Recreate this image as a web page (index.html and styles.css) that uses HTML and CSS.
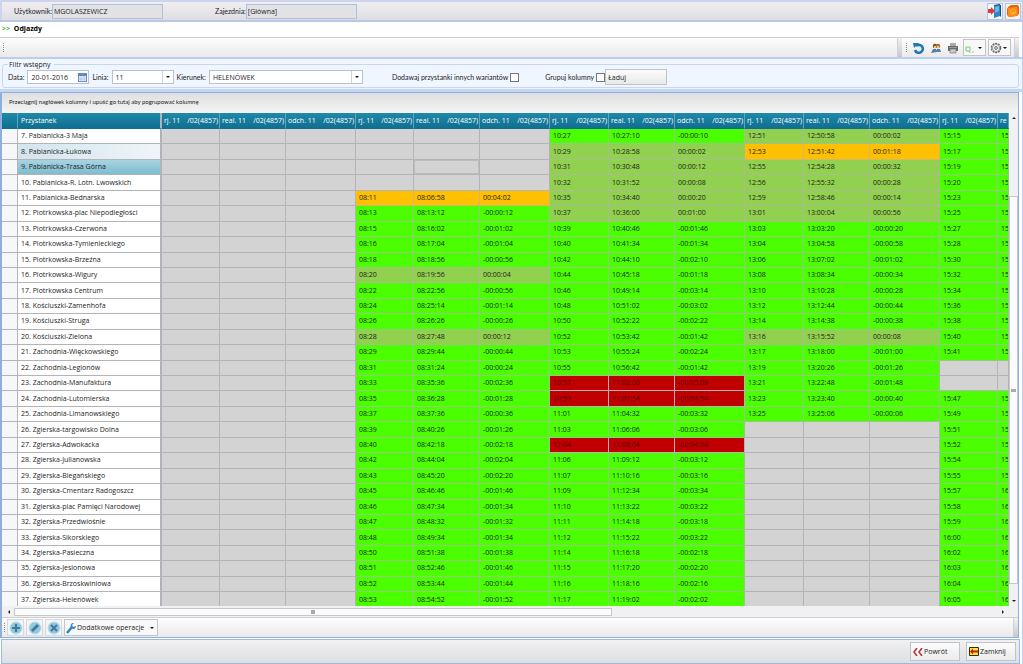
FILE: index.html
```html
<!DOCTYPE html>
<html lang="pl">
<head>
<meta charset="utf-8">
<title>Odjazdy</title>
<link rel="stylesheet" href="styles.css">
</head>
<body>
<div class="app">
  <header class="session">
    <label class="session-user" for="user">Użytkownik:</label>
    <input class="session-input" id="user" value="MGOLASZEWICZ" readonly>
    <label class="session-depot" for="depot">Zajezdnia:</label>
    <input class="session-input" id="depot" value="[Główna]" readonly>
    <div class="session-actions">
      <button class="square" aria-label="Wyloguj">
        <svg width="14" height="14" viewBox="0 0 14 14"><path d="M6 2l6-2v12l-6 2z" fill="#2b86c5"/><path d="M6 2V1l6-1v1zM12 1h1v11l-1 1z" fill="#174f7c"/><path d="M7 3l4-1v5L7 9z" fill="#69b7e6"/><path d="M0 5h3V3l4 4-4 4V9H0z" fill="#dc3a38"/></svg>
      </button>
      <button class="square" aria-label="Zakończ">
        <svg width="14" height="14" viewBox="0 0 14 14"><path d="M2 3l3-2h7l1 2v7l-2 2-8 1-2-2V5z" fill="#e66412"/><path d="M2 4l9-1 1 7-2 2-7 1-1-2z" fill="#ff8b17"/><path d="M4 6l4-1 2 2v2l-4 2-2-2z" fill="#ffb02d"/><path d="M5 9l2-3 2 2" fill="none" stroke="#e8701c" stroke-width=".8"/></svg>
      </button>
    </div>
  </header>

  <h1 class="title"><span class="title-mark">&gt;&gt;</span> Odjazdy</h1>

  <div class="toolbar toolbar-main">
    <span class="grip"></span>
    <span class="spacer"></span>
    <span class="endcap"></span>
    <span class="grip grip-tools"></span>
    <button class="tool" aria-label="Odśwież">
      <svg width="12" height="12" viewBox="0 0 12 12"><path d="M3 4a4 4 0 1 1-1 4" fill="none" stroke="#1e78b8" stroke-width="2.6"/><path d="M0 1l6 0-5 5z" fill="#1e78b8"/></svg>
    </button>
    <button class="tool" aria-label="Użytkownicy">
      <svg width="12" height="12" viewBox="0 0 12 12"><circle cx="5" cy="4" r="2.2" fill="#7a4a20"/><circle cx="8" cy="4" r="2.2" fill="#b06a2a"/><circle cx="5" cy="5" r="1.2" fill="#f1c48f"/><circle cx="8" cy="5" r="1.2" fill="#f1c48f"/><path d="M1 11l2-4h3l1 3zM6 10l1-3h3l1 3z" fill="#4e84a8"/></svg>
    </button>
    <button class="tool" aria-label="Drukuj">
      <svg width="12" height="12" viewBox="0 0 12 12"><path d="M3 1h6v4H3z" fill="#aaa"/><path d="M1 4h10v5H1z" fill="#666"/><path d="M2 5h8v1H2z" fill="#999"/><path d="M3 7h6v4H3z" fill="#ccc" stroke="#777" stroke-width=".7"/></svg>
    </button>
    <button class="split" aria-label="Eksport">
      <svg width="10" height="10" viewBox="0 0 10 10"><path d="M1 4h4v4H1zM4 8l1 2" fill="none" stroke="#76cf72"/><circle cx="8" cy="9" r=".8" fill="#76cf72"/></svg>
      <span class="arrow"></span>
    </button>
    <button class="split" aria-label="Ustawienia">
      <svg width="12" height="12" viewBox="0 0 12 12"><circle cx="6" cy="6" r="4.6" fill="none" stroke="#666" stroke-width="1.3" stroke-dasharray="2 .9"/><circle cx="6" cy="6" r="3.6" fill="none" stroke="#777" stroke-width=".7"/><circle cx="6" cy="6" r="1.4" fill="none" stroke="#666"/></svg>
      <span class="arrow"></span>
    </button>
    <span class="endcap"></span>
  </div>

  <form class="filter">
    <fieldset class="filter-set">
      <legend>Filtr wstępny</legend>
      <div class="filter-row">
        <label for="date">Data:</label>
        <span class="field field-date">
          <input id="date" value="20-01-2016">
          <svg width="9" height="9" viewBox="0 0 9 9"><rect x=".5" y=".5" width="8" height="8" fill="#dce9fa" stroke="#6889b8"/><path d="M0 1h9v2H0z" fill="#6889b8"/><path d="M3 3v6M6 3v6M0 6h9" stroke="#a3bbdd" stroke-width=".6"/></svg>
        </span>
        <label for="line">Linia:</label>
        <span class="field field-line"><select id="line"><option>11</option></select><span class="arrow"></span></span>
        <label for="direction">Kierunek:</label>
        <span class="field field-direction"><select id="direction"><option>HELENÓWEK</option></select><span class="arrow"></span></span>
        <label class="label-variants" for="variants">Dodawaj przystanki innych wariantów</label>
        <input class="check" type="checkbox" id="variants">
        <label class="label-group" for="group">Grupuj kolumny</label>
        <input class="check" type="checkbox" id="group">
        <button class="load" type="button">Ładuj</button>
      </div>
    </fieldset>
  </form>

  <main class="panel">
    <div class="group-hint">Przeciągnij nagłówek kolumny i upuść go tutaj aby pogrupować kolumnę</div>
    <div class="grid">
      <div class="grid-view">
        <table class="departures">
          <colgroup>
            <col class="c-mark"><col class="c-stop">
            <col class="c-plan-narrow"><col class="c-real"><col class="c-diff">
            <col class="c-plan-narrow"><col class="c-real"><col class="c-diff">
            <col class="c-plan"><col class="c-real"><col class="c-diff">
            <col class="c-plan"><col class="c-real"><col class="c-diff">
            <col class="c-plan-narrow"><col>
          </colgroup>
          <thead><tr id="head"><th></th><th class="stop">Przystanek</th></tr></thead>
          <tbody id="rows"></tbody>
        </table>
      </div>
      <div class="vscroll"><span class="tri up"></span><span class="vthumb"></span><span class="tri down"></span></div>
    </div>
    <div class="hscroll"><span class="tri left"></span><span class="hthumb"></span><span class="tri right"></span></div>
    <div class="toolbar operations">
      <span class="grip"></span>
      <button class="round" aria-label="Dodaj"><svg width="14" height="14" viewBox="0 0 14 14"><circle cx="7" cy="7" r="6" fill="#8ec9df" stroke="#b5dce9"/><path d="M7 3v8M3 7h8" stroke="#47799a" stroke-width="2.2"/></svg></button>
      <button class="round" aria-label="Edytuj"><svg width="14" height="14" viewBox="0 0 14 14"><circle cx="7" cy="7" r="6" fill="#8ec9df" stroke="#b5dce9"/><path d="M4 10l6-6" stroke="#47799a" stroke-width="3"/></svg></button>
      <button class="round" aria-label="Usuń"><svg width="14" height="14" viewBox="0 0 14 14"><circle cx="7" cy="7" r="6" fill="#8ec9df" stroke="#b5dce9"/><path d="M4 4l6 6M10 4l-6 6" stroke="#47799a" stroke-width="2"/></svg></button>
      <button class="split more">
        <svg width="10" height="12" viewBox="0 0 10 12"><path d="M1 11l5-6" stroke="#3286c8" stroke-width="2.6"/><path d="M8 1L6 3l1 2 3-1c0 3-3 4-5 2-1-3 0-5 3-5z" fill="#3286c8"/></svg>
        <span class="more-text">Dodatkowe operacje</span>
        <span class="arrow"></span>
      </button>
      <span class="spacer"></span>
      <span class="endcap"></span>
    </div>
  </main>

  <footer class="footer">
    <button class="nav"><svg width="10" height="8" viewBox="0 0 10 8"><path d="M4 0L1 4l3 4M9 0L6 4l3 4" fill="none" stroke="#b23a3a" stroke-width="1.6"/></svg>Powrót</button>
    <button class="nav"><svg width="10" height="9" viewBox="0 0 10 9"><path d="M.5 .5h9v8h-9z" fill="#f7e636" stroke="#332d00"/><path d="M1 4.500l3-3v2h5v2H4v2z" fill="#c41818"/></svg>Zamknij</button>
  </footer>
</div>
<script src="app.js"></script>
</body>
</html>
```

FILE: styles.css
```css
* { box-sizing: border-box; }
body { margin: 0; }
body, button, input, select {
  font-family: "Open Sans", "Noto Sans", sans-serif;
  font-size: 7px;
  color: #1c1c1c;
}
label, .group-hint { font-family: Lato, "Open Sans", sans-serif; }
button { padding: 0; display: flex; align-items: center; }
button svg { flex: none; }

.app {
  display: flex;
  flex-direction: column;
  height: 100vh;
  overflow: hidden;
  background: #fff;
  border-right: 1px solid #c3cfe8;
}

.session {
  flex: none;
  display: flex;
  align-items: center;
  height: 22px;
  padding: 0 1px 0 14px;
  background: linear-gradient(#efeff1, #dfdde2);
  border-top: 2px solid #cdd5ee;
  border-bottom: 2px solid #b9c8e4;
  box-shadow: inset 2px 0 #cdd5ee;
}
.session-input {
  width: 111px;
  height: 15px;
  padding: 0 1px;
  border: 1px solid #afc0dc;
  background: #e2e2e6;
}
.session-depot { margin-left: 52px; }
.session-actions { display: flex; gap: 2px; margin-left: auto; }
.square {
  width: 16px;
  height: 17px;
  justify-content: center;
  background: #f4f5f8;
  border: 1px solid #b9c4d8;
}

.title {
  flex: none;
  height: 15px;
  margin: 0;
  padding-left: 2px;
  font-size: 7px;
  line-height: 13px;
  font-weight: 700;
  color: #000;
}
.title-mark { margin-right: 2px; color: #4aa83a; }

.toolbar {
  flex: none;
  display: flex;
  align-items: center;
  height: 20px;
  padding-left: 3px;
  background: linear-gradient(#fdfdfd, #ebe9ea);
  border-top: 1px solid #cfcfcf;
}
.toolbar-main { margin-right: 3px; }
.grip {
  width: 1px;
  height: 10px;
  background: repeating-linear-gradient(#888 0 1px, transparent 1px 2px);
}
.grip-tools { margin: 0 3px 0 4px; }
.spacer { flex: 1; }
.endcap {
  width: 5px;
  height: 19px;
  background: linear-gradient(#f2f2f4, #c3c8d2);
  border-left: 1px solid #d2d2d6;
}
.tool {
  width: 17px;
  height: 16px;
  justify-content: center;
  border: 0;
  background: none;
}
.split {
  width: 23px;
  height: 17px;
  margin-left: 2px;
  padding: 0 3px 0 1px;
  justify-content: space-between;
  border: 1px solid #c4c4c8;
  background: #f8f8f9;
}
.toolbar > .split + .endcap { margin-left: 3px; }
.arrow {
  border: 2px solid transparent;
  border-top-color: #111;
  border-bottom: 0;
}

.filter {
  flex: none;
  padding: 1px 3px 1px 2px;
  background: #eff6ff;
  border-top: 2px solid #bccfea;
  border-bottom: 3px solid #c4d5f5;
}
.filter-set {
  margin: 0;
  padding: 0 4px 2px 5px;
  border: 1px solid #c8d8ea;
  border-radius: 3px;
}
.filter-set legend { padding: 0 3px 0 1px; line-height: 9px; }
.filter-row { display: flex; align-items: center; height: 16px; }
.field {
  position: relative;
  display: flex;
  align-items: center;
  height: 14px;
  margin: 0 3px;
  border: 1px solid #b9c3d0;
  background: #fff;
}
.field input, .field select {
  appearance: none;
  width: 100%;
  height: 12px;
  padding: 0 3px;
  border: 0;
  background: none;
}
.field svg { flex: none; margin-right: 1px; }
.field .arrow { position: absolute; right: 3px; top: 5px; pointer-events: none; }
.field select { background: linear-gradient(#ccd3dc, #ccd3dc) right 10px top / 1px 12px no-repeat; }
.field-date { width: 62px; }
.field-line { width: 62px; }
.field-direction { width: 154px; }
.label-variants { margin-left: 26px; }
.label-group { margin-left: 26px; }
.check {
  appearance: none;
  width: 9px;
  height: 9px;
  margin: 0 0 0 2px;
  border: 1px solid #777;
  background: #fff;
}
.load {
  width: 62px;
  height: 16px;
  padding-left: 2px;
  border: 1px solid #bfc1c5;
  background: linear-gradient(#fcfcfc, #e9e9eb);
}

.panel {
  flex: 1;
  min-height: 0;
  display: flex;
  flex-direction: column;
  margin-right: 3px;
  border: solid #8fb0dd;
  border-width: 1px 1px 1px 2px;
}
.group-hint {
  flex: none;
  height: 20px;
  padding-left: 7px;
  font-size: 6px;
  line-height: 18px;
  background: linear-gradient(#dfdfe1, #f5f5f5);
}
.grid { flex: 1; min-height: 0; display: flex; }
.grid-view { flex: 1; min-width: 0; overflow: hidden; }

.departures {
  width: 100%;
  height: calc(100% + 2px);
  table-layout: fixed;
  border-collapse: separate;
  border-spacing: 0;
}
.c-mark { width: 16px; }
.c-stop { width: 144px; }
.c-plan-narrow { width: 58px; }
.c-plan { width: 59px; }
.c-real { width: 66px; }
.c-diff { width: 70px; }
.departures th, .departures td {
  padding: 0 0 0 3px;
  overflow: hidden;
  white-space: nowrap;
  text-align: left;
  font-weight: 400;
  line-height: 10px;
  border-right: 1px solid #b4b4b8;
  border-bottom: 1px solid #b4b4b8;
}
.departures thead th {
  height: 16px;
  padding: 0 1px 0 2px;
  color: #fff;
  background: linear-gradient(#2089a9, #0f6f90);
  border-right-color: #5ba5bd;
  border-bottom-color: #0f6f90;
}
.departures thead .stop { padding-left: 3px; }
.pair { display: flex; justify-content: space-between; }
.departures .mark { background: #f5f7fa; }
.departures .stop { border-right: 2px solid #b0b4ba; }
.departures .early { background: #92d050; border-color: rgba(178, 178, 186, 0.6); }
.departures .late { background: #4cff00; border-color: rgba(178, 178, 186, 0.7); }
.departures .alert { background: #ffc000; border-color: rgba(178, 178, 186, 0.6); }
.departures .critical { background: #c00000; color: #5c0000; }
.departures .none { background: #d3d3d3; }
.departures .hover { background: linear-gradient(90deg, #d3e5ee, #eef5f9); }
.departures .selected { background: linear-gradient(#a9d3e0, #7dbdd1); }
.departures .current { box-shadow: inset 0 0 0 1px #bcbcbc; }

.vscroll {
  width: 9px;
  display: flex;
  flex-direction: column;
  align-items: center;
  padding: 4px 0;
  background: #f1f1f3;
}
.vthumb {
  width: 9px;
  flex: 1;
  margin: 77px 0 16px;
  border: 1px solid #c5c7cc;
  background: linear-gradient(#aaa, #aaa) center / 5px 3px no-repeat, #fbfbfc;
}
.hscroll {
  flex: none;
  display: flex;
  align-items: center;
  height: 11px;
  padding: 0 14px 0 6px;
  background: #f1f1f3;
}
.hthumb {
  width: 60%;
  height: 8px;
  margin: 0 auto 0 4px;
  border: 1px solid #c5c7cc;
  background: linear-gradient(#aaa, #aaa) center / 4px 4px no-repeat, #fbfbfc;
}
.tri { border: 2px solid transparent; }
.up { border-top: 0; border-bottom-color: #222; }
.down { border-bottom: 0; border-top-color: #222; }
.left { border-left: 0; border-right-color: #222; }
.right { border-right: 0; border-left-color: #222; }

.operations { padding-left: 2px; }
.round {
  width: 17px;
  height: 17px;
  margin-left: 2px;
  justify-content: center;
  border: 1px solid #d8d8dc;
  background: #f5f5f6;
}
.more { width: 94px; gap: 1px; }
.more-text { margin-right: auto; }

.footer {
  flex: none;
  display: flex;
  justify-content: flex-end;
  align-items: center;
  gap: 6px;
  height: 25px;
  margin: 1px 2px 0 1px;
  padding-right: 3px;
  border: 1px solid #9db9e0;
  background: linear-gradient(#f0f0f2, #dedfe2);
}
.nav {
  width: 50px;
  height: 19px;
  padding-left: 2px;
  gap: 1px;
  border: 1px solid #bfc3ca;
  background: linear-gradient(#fbfbfb, #ececee);
}
```

FILE: app.js
```js
const kinds = { g: "late", o: "early", a: "alert", r: "critical" };

// Each line: stop | course 2 | course 3 | course 4 | course 5.
// A course holds its kind letter, planned time, actual time and deviation.
const data = `7. Pabianicka-3 Maja||g 10:27 10:27:10 -00:00:10|o 12:51 12:50:58 00:00:02|g 15:15 15
8. Pabianicka-Łukowa||o 10:29 10:28:58 00:00:02|a 12:53 12:51:42 00:01:18|g 15:17 15
9. Pabianicka-Trasa Górna||o 10:31 10:30:48 00:00:12|o 12:55 12:54:28 00:00:32|g 15:19 15
10. Pabianicka-R. Lotn. Lwowskich||o 10:32 10:31:52 00:00:08|o 12:56 12:55:32 00:00:28|g 15:20 15
11. Pabianicka-Bednarska|a 08:11 08:06:58 00:04:02|o 10:35 10:34:40 00:00:20|o 12:59 12:58:46 00:00:14|g 15:23 15
12. Piotrkowska-plac Niepodległości|g 08:13 08:13:12 -00:00:12|o 10:37 10:36:00 00:01:00|o 13:01 13:00:04 00:00:56|g 15:25 15
13. Piotrkowska-Czerwona|g 08:15 08:16:02 -00:01:02|g 10:39 10:40:46 -00:01:46|g 13:03 13:03:20 -00:00:20|g 15:27 15
14. Piotrkowska-Tymienieckiego|g 08:16 08:17:04 -00:01:04|g 10:40 10:41:34 -00:01:34|g 13:04 13:04:58 -00:00:58|g 15:28 15
15. Piotrkowska-Brzeźna|g 08:18 08:18:56 -00:00:56|g 10:42 10:44:10 -00:02:10|g 13:06 13:07:02 -00:01:02|g 15:30 15
16. Piotrkowska-Wigury|o 08:20 08:19:56 00:00:04|g 10:44 10:45:18 -00:01:18|g 13:08 13:08:34 -00:00:34|g 15:32 15
17. Piotrkowska Centrum|g 08:22 08:22:56 -00:00:56|g 10:46 10:49:14 -00:03:14|g 13:10 13:10:28 -00:00:28|g 15:34 15
18. Kościuszki-Zamenhofa|g 08:24 08:25:14 -00:01:14|g 10:48 10:51:02 -00:03:02|g 13:12 13:12:44 -00:00:44|g 15:36 15
19. Kościuszki-Struga|g 08:26 08:26:26 -00:00:26|g 10:50 10:52:22 -00:02:22|g 13:14 13:14:38 -00:00:38|g 15:38 15
20. Kościuszki-Zielona|o 08:28 08:27:48 00:00:12|g 10:52 10:53:42 -00:01:42|o 13:16 13:15:52 00:00:08|g 15:40 15
21. Zachodnia-Więckowskiego|g 08:29 08:29:44 -00:00:44|g 10:53 10:55:24 -00:02:24|g 13:17 13:18:00 -00:01:00|g 15:41 15
22. Zachodnia-Legionów|g 08:31 08:31:24 -00:00:24|g 10:55 10:56:42 -00:01:42|g 13:19 13:20:26 -00:01:26|
23. Zachodnia-Manufaktura|g 08:33 08:35:36 -00:02:36|r 10:57 11:02:08 -00:05:08|g 13:21 13:22:48 -00:01:48|
24. Zachodnia-Lutomierska|g 08:35 08:36:28 -00:01:28|r 10:59 11:03:54 -00:04:54|g 13:23 13:23:40 -00:00:40|g 15:47 15
25. Zachodnia-Limanowskiego|g 08:37 08:37:36 -00:00:36|g 11:01 11:04:32 -00:03:32|g 13:25 13:25:06 -00:00:06|g 15:49 15
26. Zgierska-targowisko Dolna|g 08:39 08:40:26 -00:01:26|g 11:03 11:06:06 -00:03:06||g 15:51 15
27. Zgierska-Adwokacka|g 08:40 08:42:18 -00:02:18|r 11:04 11:08:04 -00:04:04||g 15:52 15
28. Zgierska-Julianowska|g 08:42 08:44:04 -00:02:04|g 11:06 11:09:12 -00:03:12||g 15:54 15
29. Zgierska-Biegańskiego|g 08:43 08:45:20 -00:02:20|g 11:07 11:10:16 -00:03:16||g 15:55 15
30. Zgierska-Cmentarz Radogoszcz|g 08:45 08:46:46 -00:01:46|g 11:09 11:12:34 -00:03:34||g 15:57 16
31. Zgierska-plac Pamięci Narodowej|g 08:46 08:47:34 -00:01:34|g 11:10 11:13:22 -00:03:22||g 15:58 16
32. Zgierska-Przedwiośnie|g 08:47 08:48:32 -00:01:32|g 11:11 11:14:18 -00:03:18||g 15:59 16
33. Zgierska-Sikorskiego|g 08:48 08:49:34 -00:01:34|g 11:12 11:15:22 -00:03:22||g 16:00 16
34. Zgierska-Pasieczna|g 08:50 08:51:38 -00:01:38|g 11:14 11:16:18 -00:02:18||g 16:02 16
35. Zgierska-Jesionowa|g 08:51 08:52:46 -00:01:46|g 11:15 11:17:20 -00:02:20||g 16:03 16
36. Zgierska-Brzoskwiniowa|g 08:52 08:53:44 -00:01:44|g 11:16 11:18:16 -00:02:16||g 16:04 16
37. Zgierska-Helenówek|g 08:53 08:54:52 -00:01:52|g 11:17 11:19:02 -00:02:02||g 16:05 16`;

const columns = ["rj.", "real.", "odch."];
let head = "";
for (let i = 0; i < 13; i++) {
  head += `<th><span class="pair"><span>${columns[i % 3]} 11</span><span>/02(4857)</span></span></th>`;
}
head += "<th>re</th>";
document.getElementById("head").insertAdjacentHTML("beforeend", head);

const stopState = { 1: " hover", 2: " selected" };

document.getElementById("rows").innerHTML = data.split("\n").map((line, row) => {
  const [stop, ...courses] = line.split("|");
  let html = `<td class="mark"></td><td class="stop${stopState[row] || ""}">${stop}</td>`;
  html += '<td class="none"></td>'.repeat(3);
  courses.forEach((course, index) => {
    const width = index === 3 ? 2 : 3;
    const [kind, ...times] = course.split(" ");
    for (let i = 0; i < width; i++) {
      const current = row === 2 && index === 0 && i === 1 ? " current" : "";
      html += `<td class="${kinds[kind] || "none"}${current}">${times[i] || ""}</td>`;
    }
  });
  return `<tr>${html}</tr>`;
}).join("");
```
